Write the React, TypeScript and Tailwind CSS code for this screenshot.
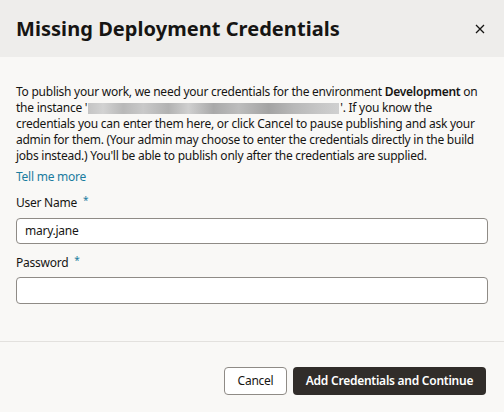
import React from "react";

export default function App() {
  return (
    <div
      className="w-[504px] h-[412px] bg-[#f9f8f6] flex flex-col text-[#161513] overflow-hidden"
      style={{ fontFamily: '"Noto Sans", "Open Sans", sans-serif' }}
    >
      <div className="h-[57px] bg-[#eeedeb] flex items-center justify-between pl-4 pr-[14px] shrink-0">
        <h1 className="text-[20px] font-bold leading-none tracking-[0.05px]">Missing Deployment Credentials</h1>
        <button className="w-5 h-5 flex items-center justify-center">
          <svg width="10" height="10" viewBox="0 0 10 10">
            <path d="M1 1L9 9M9 1L1 9" stroke="#161513" strokeWidth="1.3" />
          </svg>
        </button>
      </div>
      <div className="flex flex-col px-4 pt-[27px] grow text-[12px] tracking-[-0.25px]">
        <p className="leading-[16px]">
          To publish your work, we need your credentials for the environment <b className="font-semibold">Development</b> on
          the instance '<span className="inline-block align-middle mx-[1px] w-[251px] h-[11px] bg-[linear-gradient(90deg,#c4c4c4_0%,#d2d2d2_6%,#b8b8b8_14%,#c9c9c9_22%,#b2b2b2_32%,#cfcfcf_40%,#a9a9a9_50%,#bdbdbd_60%,#a3a3a3_72%,#b8b8b8_82%,#c6c6c6_92%,#d0d0d0_100%)]"></span>'. If you know the credentials you can enter them here, or click Cancel to pause publishing and ask your admin for them. (Your admin may choose to enter the credentials directly in the build jobs instead.) You'll be able to publish only after the credentials are supplied.
        </p>
        <a className="leading-[16px] text-[#1b7c9f] mt-[5px]">Tell me more</a>
        <label className="leading-[16px] mt-[10px] flex">
          User Name <span className="text-[#1b7c9f] text-[10px] ml-[6px] -mt-[3px]">*</span>
        </label>
        <div className="mt-[7px] h-[26px] border border-[#8f8b86] rounded-[4px] bg-white flex items-center px-2">
          mary.jane
        </div>
        <label className="leading-[16px] mt-[11px] flex">
          Password <span className="text-[#1b7c9f] text-[10px] ml-[6px] -mt-[3px]">*</span>
        </label>
        <div className="mt-[6px] h-[27px] border border-[#8f8b86] rounded-[4px] bg-white"></div>
      </div>
      <div className="border-t border-[#e3e1de] h-[71px] shrink-0 flex items-center justify-end gap-[6px] px-[18px] pt-[8px] text-[12px] tracking-[-0.25px]">
        <button className="h-[28px] w-[63px] border border-[#8f8b86] rounded-[4px] bg-white">Cancel</button>
        <button className="h-[28px] w-[193px] rounded-[4px] bg-[#312d2a] text-white font-semibold">Add Credentials and Continue</button>
      </div>
    </div>
  );
}
